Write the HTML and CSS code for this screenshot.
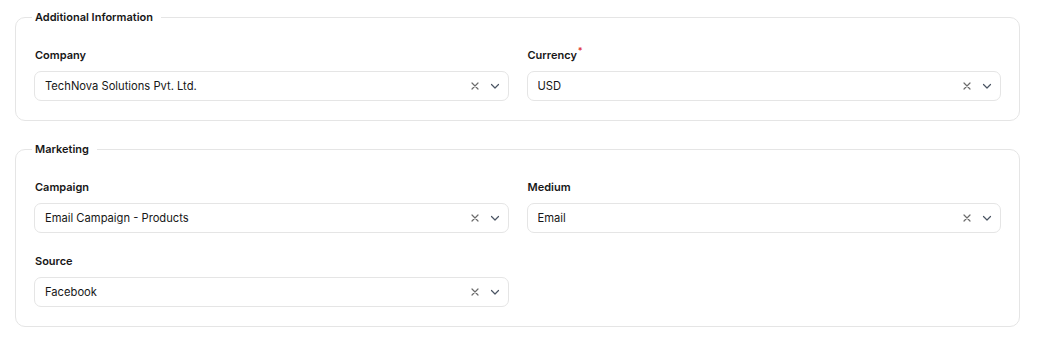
FILE: index.html
```html
<!DOCTYPE html>
<html lang="en">
<head>
<meta charset="UTF-8" />
<meta name="viewport" content="width=device-width, initial-scale=1" />
<title>Lead Details</title>
<link rel="stylesheet" href="styles.css">
</head>
<body>

<div class="page">

  <fieldset class="section">
    <legend>Additional Information</legend>
    <div class="grid">
      <div class="field">
        <label>Company</label>
        <div class="select">
          <span class="value">TechNova Solutions Pvt. Ltd.</span>
          <svg class="icon clear" viewBox="0 0 10 10"><path d="M2 2l6 6M8 2l-6 6"/></svg>
          <svg class="icon caret" viewBox="0 0 10 10"><path d="M1.5 3.5l3.5 3.5 3.5-3.5"/></svg>
        </div>
      </div>
      <div class="field">
        <label>Currency<span class="req">*</span></label>
        <div class="select">
          <span class="value">USD</span>
          <svg class="icon clear" viewBox="0 0 10 10"><path d="M2 2l6 6M8 2l-6 6"/></svg>
          <svg class="icon caret" viewBox="0 0 10 10"><path d="M1.5 3.5l3.5 3.5 3.5-3.5"/></svg>
        </div>
      </div>
    </div>
  </fieldset>

  <fieldset class="section">
    <legend>Marketing</legend>
    <div class="grid">
      <div class="field">
        <label>Campaign</label>
        <div class="select">
          <span class="value">Email Campaign - Products</span>
          <svg class="icon clear" viewBox="0 0 10 10"><path d="M2 2l6 6M8 2l-6 6"/></svg>
          <svg class="icon caret" viewBox="0 0 10 10"><path d="M1.5 3.5l3.5 3.5 3.5-3.5"/></svg>
        </div>
      </div>
      <div class="field">
        <label>Medium</label>
        <div class="select">
          <span class="value">Email</span>
          <svg class="icon clear" viewBox="0 0 10 10"><path d="M2 2l6 6M8 2l-6 6"/></svg>
          <svg class="icon caret" viewBox="0 0 10 10"><path d="M1.5 3.5l3.5 3.5 3.5-3.5"/></svg>
        </div>
      </div>
      <div class="field">
        <label>Source</label>
        <div class="select">
          <span class="value">Facebook</span>
          <svg class="icon clear" viewBox="0 0 10 10"><path d="M2 2l6 6M8 2l-6 6"/></svg>
          <svg class="icon caret" viewBox="0 0 10 10"><path d="M1.5 3.5l3.5 3.5 3.5-3.5"/></svg>
        </div>
      </div>
    </div>
  </fieldset>

</div>

</body>
</html>
```

FILE: styles.css
```css
* {
  box-sizing: border-box;
}
body {
  margin: 0;
  font-family: Inter, "Noto Sans", sans-serif;
  font-size: 11.2px;
  color: #171717;
  background: #fff;
}
.page {
  padding: 9px 18px 0 15px;
}
.section {
  margin: 0 0 20px;
  padding: 22px 18px 19px;
  border: 1px solid #e5e5e5;
  border-radius: 10px;
  min-width: 0;
}
.section legend {
  padding: 0 8px 0 3px;
  margin-left: -2px;
  font-weight: 600;
  font-size: 11px;
  line-height: 16px;
}
.grid {
  display: grid;
  grid-template-columns: 1fr 1fr;
  column-gap: 18px;
  row-gap: 20px;
}
.field label {
  display: block;
  font-weight: 600;
  font-size: 11px;
  line-height: 16px;
  margin-bottom: 8px;
  padding-left: 1px;
}
.req {
  color: #e03636;
  font-size: 9px;
  vertical-align: top;
  position: relative;
  top: -4px;
  margin-left: 1px;
}
.select {
  display: flex;
  align-items: center;
  height: 30px;
  padding: 0 10px;
  border: 1px solid #e5e5e5;
  border-radius: 7px;
  background: #fff;
}
.value {
  flex: 1;
  white-space: nowrap;
  overflow: hidden;
}
.icon {
  width: 10px;
  height: 10px;
  fill: none;
  stroke-width: 1.2;
  stroke-linecap: round;
  stroke-linejoin: round;
}
.clear {
  stroke: #6b6b6b;
  margin-right: 10px;
}
.caret {
  stroke: #4b5563;
  margin-right: -2px;
}
```
